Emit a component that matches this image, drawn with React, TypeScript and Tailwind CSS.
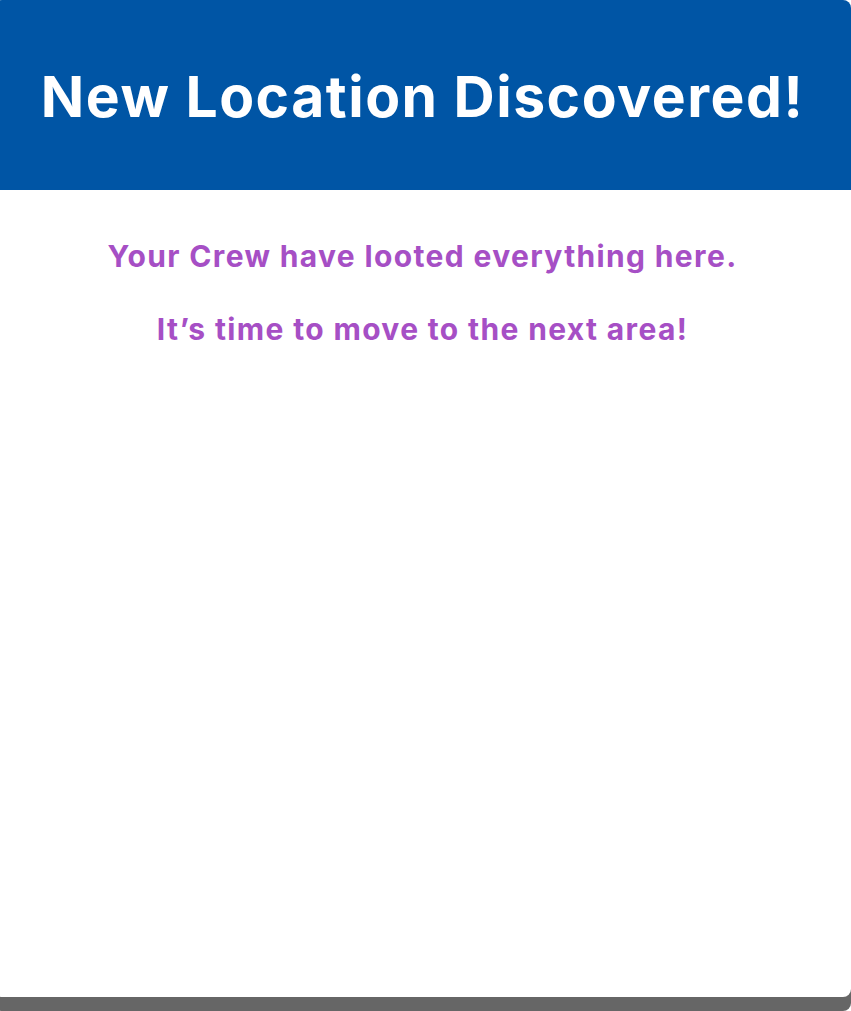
export default function App() {
  return (
    <div className="w-[851px] h-[1011px] bg-white overflow-hidden" style={{ fontFamily: 'Inter, "Open Sans", sans-serif' }}>
      <div className="ml-[-6px] w-[857px] h-[997px] bg-white rounded-lg shadow-[0_14px_0_#666] flex flex-col overflow-hidden">
        <div className="h-[190px] bg-[#0055a5] flex items-center justify-center pt-[2px]">
          <h1 className="text-white font-bold text-[57px] tracking-[1.5px] leading-none">New Location Discovered!</h1>
        </div>
        <div className="flex flex-col items-center pt-[50px] gap-[41px] text-[#a64fc5] font-bold text-[30px] leading-[32px] tracking-[1.35px]">
          <p>Your Crew have looted everything here.</p>
          <p>It’s time to move to the next area!</p>
        </div>
      </div>
    </div>
  );
}
